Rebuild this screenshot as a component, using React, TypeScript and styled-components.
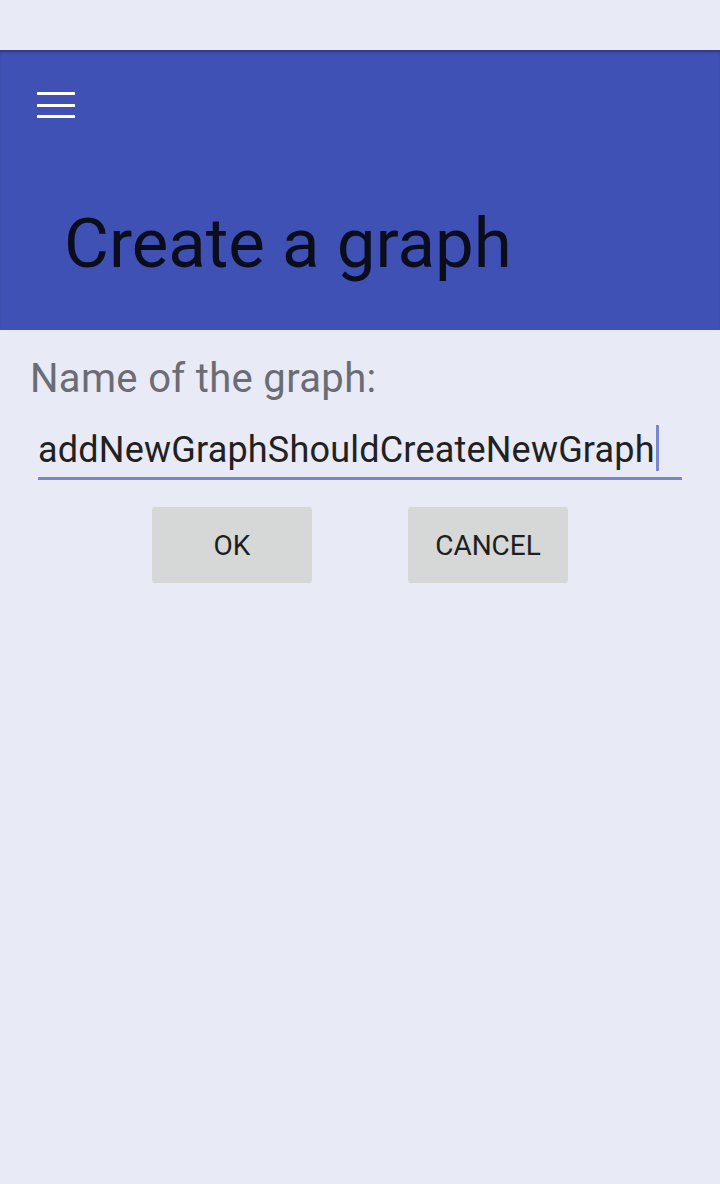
import React from "react";
import styled, { createGlobalStyle } from "styled-components";

const Global = createGlobalStyle`
  html, body { margin: 0; padding: 0; background: #e8eaf6; }
  body { font-family: Roboto, "Noto Sans", sans-serif; }
`;

const Screen = styled.div`
  width: 720px;
  height: 1184px;
  background: #e8eaf6;
  display: flex;
  flex-direction: column;
`;

const StatusBar = styled.div`
  height: 50px;
  background: #e8eaf6;
`;

const AppBar = styled.header`
  height: 280px;
  background: #3f51b5;
  box-shadow: inset 0 3px 3px -1px rgba(0, 0, 0, 0.28);
  display: flex;
  flex-direction: column;
  box-sizing: border-box;
  padding: 42px 0 0 37px;
`;

const MenuButton = styled.button`
  width: 38px;
  height: 26px;
  padding: 0;
  border: 0;
  background: transparent;
  display: flex;
  flex-direction: column;
  justify-content: space-between;
  cursor: pointer;
`;

const MenuLine = styled.span`
  display: block;
  height: 3px;
  width: 38px;
  background: #ffffff;
`;

const Title = styled.h1`
  margin: 86px 0 0 27px;
  font-family: Roboto, sans-serif;
  font-weight: 400;
  font-size: 69px;
  line-height: 80px;
  color: #0b0d1c;
  letter-spacing: 0;
`;

const Content = styled.main`
  display: flex;
  flex-direction: column;
  padding: 26px 38px 0 30px;
`;

const Label = styled.label`
  font-size: 40px;
  line-height: 46px;
  letter-spacing: 0.33px;
  color: #6b6c74;
`;

const Field = styled.div`
  margin: 23px 0 0 8px;
  border-bottom: 3px solid #7986cb;
  height: 55px;
  box-sizing: border-box;
  display: flex;
  align-items: flex-start;
`;

const Value = styled.span`
  font-size: 36px;
  line-height: 46px;
  letter-spacing: 0.2px;
  color: #212121;
  margin-top: 2px;
`;

const Cursor = styled.span`
  display: inline-block;
  width: 3px;
  height: 46px;
  margin-left: 1px;
  background: #7986cb;
`;

const Buttons = styled.div`
  display: flex;
  justify-content: center;
  gap: 96px;
  margin-top: 27px;
  padding-left: 8px;
`;

const Button = styled.button`
  width: 160px;
  height: 76px;
  border: 0;
  border-radius: 3px;
  background: #d6d7d7;
  font-family: Roboto, sans-serif;
  font-size: 28px;
  color: #1e1e1e;
  padding: 0;
  display: flex;
  align-items: center;
  justify-content: center;
  cursor: pointer;
`;

export default function App() {
  return (
    <>
      <Global />
      <Screen>
        <StatusBar />
        <AppBar>
          <MenuButton aria-label="Menu">
            <MenuLine />
            <MenuLine />
            <MenuLine />
          </MenuButton>
          <Title>Create a graph</Title>
        </AppBar>
        <Content>
          <Label>Name of the graph:</Label>
          <Field>
            <Value>addNewGraphShouldCreateNewGraph</Value>
            <Cursor />
          </Field>
          <Buttons>
            <Button>OK</Button>
            <Button>CANCEL</Button>
          </Buttons>
        </Content>
      </Screen>
    </>
  );
}
